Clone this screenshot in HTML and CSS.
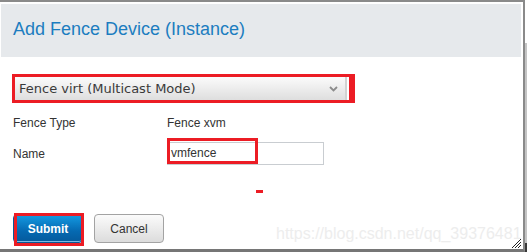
FILE: index.html
```html
<!DOCTYPE html>
<html>
<head>
<meta charset="utf-8">
<link rel="stylesheet" href="styles.css">
</head>
<body>
<div class="frame">
  <div class="dialog">
    <div class="header"><h1 class="title">Add Fence Device (Instance)</h1></div>
    <div class="content">
      <div class="mark-box select-mark">
        <div class="select">
          <span class="select-text">Fence virt (Multicast Mode)</span>
          <svg class="chevron" width="9" height="6" viewBox="0 0 9 6"><path d="M1 1 L4.5 4.5 L8 1" fill="none" stroke="#8c8c8c" stroke-width="1.8"/></svg>
        </div>
      </div>
      <div class="form">
        <div class="label">Fence Type</div>
        <div class="value">Fence xvm</div>
        <div class="label">Name</div>
        <div class="input-wrap">
          <div class="input">vmfence</div>
          <div class="mark-box input-mark"></div>
        </div>
      </div>
      <div class="buttons">
        <div class="btn-wrap">
          <button class="btn btn-primary">Submit</button>
          <div class="mark-box submit-mark"></div>
        </div>
        <button class="btn btn-default">Cancel</button>
      </div>
    </div>
    <div class="dash"></div>
    <div class="watermark">https://blog.csdn.net/qq_39376481</div>
    <svg class="grip" width="11" height="11" viewBox="0 0 11 11"><path d="M1 10 L10 1 M4 10 L10 4 M7 10 L10 7" stroke="#222" stroke-width="1"/></svg>
  </div>
  <div class="edge"></div>
</div>
</body>
</html>
```
FILE: styles.css
```css
html, body {
  margin: 0;
  padding: 0;
  background: #fff;
}
.frame {
  display: flex;
  width: 527px;
  height: 252px;
  overflow: hidden;
}
.dialog {
  position: relative;
  box-sizing: border-box;
  width: 525px;
  height: 252px;
  border-top: 2px solid #8a8a8a;
  border-right: 2px solid #8a8a8a;
  border-bottom: 3px solid #767676;
  padding: 2px 2px 0 1px;
  font-family: "Liberation Sans", Arial, sans-serif;
  font-size: 12px;
  color: #333;
}
.edge {
  width: 2px;
  height: 252px;
  background: linear-gradient(#ffffff 0, #ffffff 43px, #c4c4c4 43px, #c4c4c4 243px, #3a3a3a 243px);
}
.header {
  box-sizing: border-box;
  height: 53px;
  background: #e6e9ec;
  padding: 14px 0 0 12px;
}
.title {
  margin: 0;
  font-weight: normal;
  font-size: 18px;
  line-height: 22px;
  color: #1c7dc0;
}
.content {
  padding: 17px 0 0 11px;
}
.mark-box {
  border: 3px solid #ec1c24;
}
.select-mark {
  display: inline-block;
  border-right-width: 6px;
  padding-right: 2px;
}
.select {
  box-sizing: border-box;
  width: 332px;
  height: 23px;
  display: flex;
  align-items: center;
  justify-content: space-between;
  padding: 0 7px 0 4px;
  background: linear-gradient(#fbfbfb, #dedede);
  border-right: 2px solid #d2d2d2;
  font-family: "DejaVu Sans", sans-serif;
  font-size: 13px;
  color: #3a3a3a;
}
.chevron {
  display: block;
}
.form {
  display: grid;
  grid-template-columns: 154px 1fr;
  row-gap: 12px;
  align-items: center;
  margin: 13px 0 0 1px;
  line-height: 14px;
}
.input-wrap {
  position: relative;
  width: 157px;
}
.input {
  box-sizing: border-box;
  height: 23px;
  border: 1px solid #c9cdd1;
  padding-left: 3px;
  line-height: 21px;
  color: #333;
}
.input-mark {
  position: absolute;
  left: 0;
  top: -4px;
  width: 85px;
  height: 20px;
}
.buttons {
  display: flex;
  gap: 11px;
  margin: 49px 0 0 1px;
}
.btn-wrap {
  position: relative;
}
.btn {
  box-sizing: border-box;
  width: 70px;
  height: 29px;
  padding: 0;
  font-family: "Liberation Sans", Arial, sans-serif;
  font-size: 12px;
  border-radius: 4px;
  display: block;
}
.btn-primary {
  width: 70px;
  font-weight: bold;
  color: #fff;
  border: 1px solid #0a5796;
  background: linear-gradient(#149ae2, #0569b1 60%, #055a9c);
  box-shadow: inset 0 -1px 0 #7fb8e0;
}
.btn-default {
  color: #333;
  border: 1px solid #a3a3a3;
  background: linear-gradient(#fbfbfb, #dcdcdc);
}
.submit-mark {
  position: absolute;
  left: 1px;
  top: -1px;
  width: 64px;
  height: 27px;
}
.dash {
  position: absolute;
  left: 256px;
  top: 188px;
  width: 7px;
  height: 3px;
  background: #ec1c24;
}
.watermark {
  position: absolute;
  left: 276px;
  top: 223px;
  font-size: 16px;
  line-height: 18px;
  color: #ededed;
  white-space: nowrap;
}
.grip {
  position: absolute;
  right: 1px;
  bottom: 0;
}
```
